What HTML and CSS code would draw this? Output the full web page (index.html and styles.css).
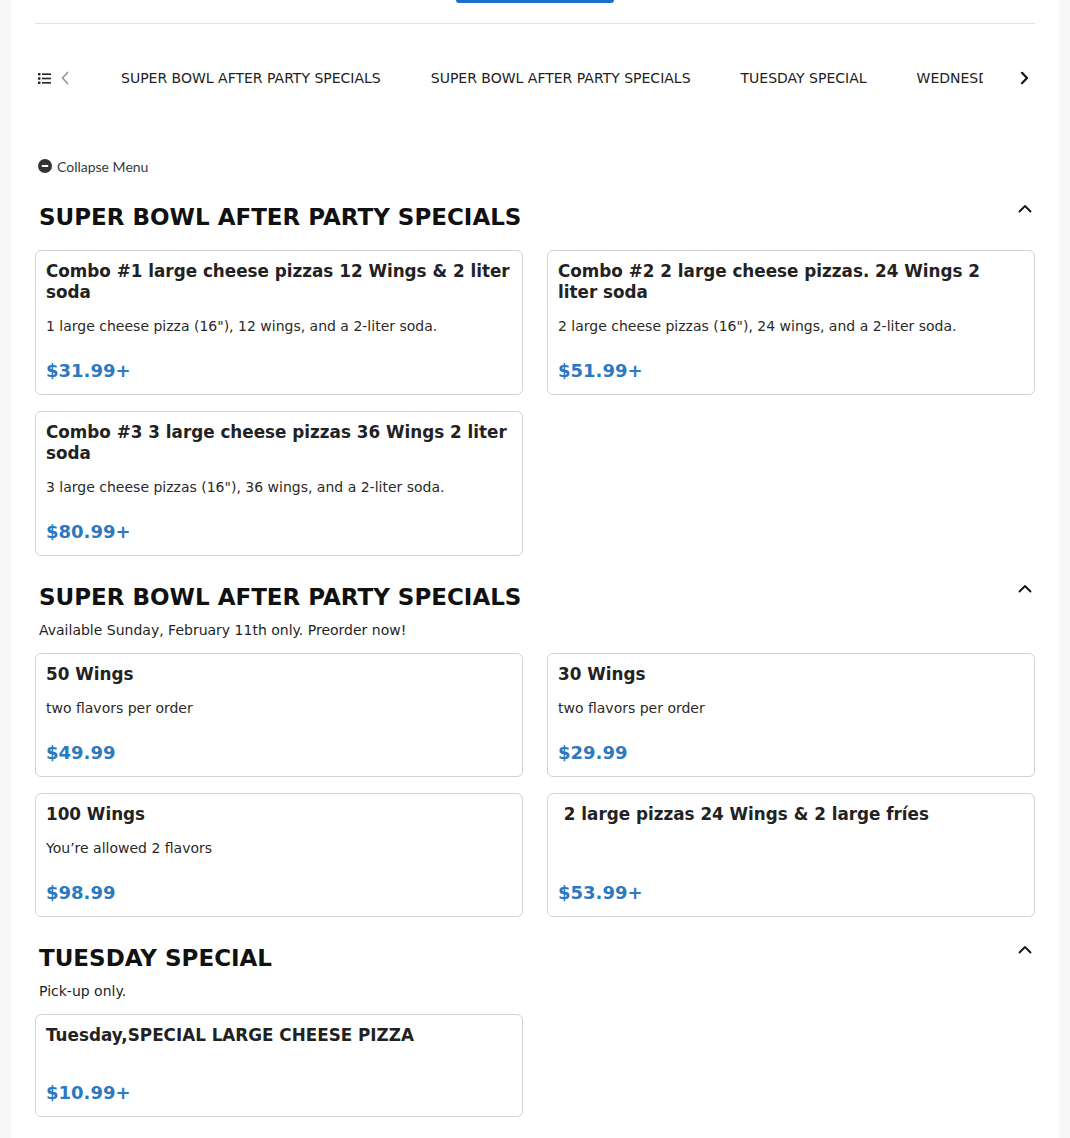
FILE: index.html
```html
<!DOCTYPE html>
<html lang="en">
<head>
<meta charset="utf-8">
<title>Menu</title>
<link rel="stylesheet" href="styles.css">
</head>
<body>
<div class="page">
  <div class="topbar"><div class="top-btn"></div></div>

  <nav class="tabs">
    <div class="tab-controls">
      <svg class="list-icon" width="13" height="11" viewBox="0 0 13 11" aria-hidden="true">
        <rect x="0" y="0" width="2.4" height="2.4" fill="#222"/>
        <rect x="0" y="4.3" width="2.4" height="2.4" fill="#222"/>
        <rect x="0" y="8.6" width="2.4" height="2.4" fill="#222"/>
        <rect x="4" y="0.4" width="9" height="1.6" fill="#222"/>
        <rect x="4" y="4.7" width="9" height="1.6" fill="#222"/>
        <rect x="4" y="9" width="9" height="1.6" fill="#222"/>
      </svg>
      <svg class="prev-icon" width="8" height="14" viewBox="0 0 8 14" aria-hidden="true">
        <path d="M6.5 1.5 L1.5 7 L6.5 12.5" fill="none" stroke="#9a9a9a" stroke-width="1.8" stroke-linecap="round" stroke-linejoin="round"/>
      </svg>
    </div>
    <div class="tab-scroll">
      <a class="tab">SUPER BOWL AFTER PARTY SPECIALS</a>
      <a class="tab">SUPER BOWL AFTER PARTY SPECIALS</a>
      <a class="tab">TUESDAY SPECIAL</a>
      <a class="tab">WEDNESDAY SPECIAL</a>
      <a class="tab">THURSDAY SPECIAL</a>
    </div>
    <div class="tab-next">
      <svg width="9" height="14" viewBox="0 0 9 14" aria-hidden="true">
        <path d="M2 1.8 L7 7 L2 12.2" fill="none" stroke="#111" stroke-width="2.2" stroke-linecap="round" stroke-linejoin="round"/>
      </svg>
    </div>
  </nav>

  <div class="collapse">
    <svg width="14" height="14" viewBox="0 0 14 14" aria-hidden="true">
      <circle cx="7" cy="7" r="7" fill="#343434"/>
      <rect x="3.8" y="6" width="6.4" height="2" fill="#fff"/>
    </svg>
    <span>Collapse Menu</span>
  </div>

  <section class="section">
    <div class="section-head">
      <h2>SUPER BOWL AFTER PARTY SPECIALS</h2>
      <svg class="chev" width="14" height="9" viewBox="0 0 14 9" aria-hidden="true">
        <path d="M1.5 7.5 L7 2 L12.5 7.5" fill="none" stroke="#111" stroke-width="1.8" stroke-linecap="round" stroke-linejoin="round"/>
      </svg>
    </div>
    <div class="grid">
      <div class="card">
        <h3>Combo #1 large cheese pizzas 12 Wings &amp; 2 liter soda</h3>
        <p class="desc">1 large cheese pizza (16"), 12 wings, and a 2-liter soda.</p>
        <div class="price">$31.99+</div>
      </div>
      <div class="card">
        <h3>Combo #2 2 large cheese pizzas. 24 Wings 2 liter soda</h3>
        <p class="desc">2 large cheese pizzas (16"), 24 wings, and a 2-liter soda.</p>
        <div class="price">$51.99+</div>
      </div>
      <div class="card">
        <h3>Combo #3 3 large cheese pizzas 36 Wings 2 liter soda</h3>
        <p class="desc">3 large cheese pizzas (16"), 36 wings, and a 2-liter soda.</p>
        <div class="price">$80.99+</div>
      </div>
    </div>
  </section>

  <section class="section">
    <div class="section-head has-sub">
      <h2>SUPER BOWL AFTER PARTY SPECIALS</h2>
      <svg class="chev" width="14" height="9" viewBox="0 0 14 9" aria-hidden="true">
        <path d="M1.5 7.5 L7 2 L12.5 7.5" fill="none" stroke="#111" stroke-width="1.8" stroke-linecap="round" stroke-linejoin="round"/>
      </svg>
    </div>
    <p class="sub">Available Sunday, February 11th only. Preorder now!</p>
    <div class="grid">
      <div class="card">
        <h3>50 Wings</h3>
        <p class="desc">two flavors per order</p>
        <div class="price">$49.99</div>
      </div>
      <div class="card">
        <h3>30 Wings</h3>
        <p class="desc">two flavors per order</p>
        <div class="price">$29.99</div>
      </div>
      <div class="card">
        <h3>100 Wings</h3>
        <p class="desc">You’re allowed 2 flavors</p>
        <div class="price">$98.99</div>
      </div>
      <div class="card">
        <h3>&nbsp;2 large pizzas 24 Wings &amp; 2 large fríes</h3>
        <p class="desc"></p>
        <div class="price">$53.99+</div>
      </div>
    </div>
  </section>

  <section class="section">
    <div class="section-head has-sub">
      <h2>TUESDAY SPECIAL</h2>
      <svg class="chev" width="14" height="9" viewBox="0 0 14 9" aria-hidden="true">
        <path d="M1.5 7.5 L7 2 L12.5 7.5" fill="none" stroke="#111" stroke-width="1.8" stroke-linecap="round" stroke-linejoin="round"/>
      </svg>
    </div>
    <p class="sub">Pick-up only.</p>
    <div class="grid">
      <div class="card">
        <h3>Tuesday,SPECIAL LARGE CHEESE PIZZA</h3>
        <p class="desc"></p>
        <div class="price">$10.99+</div>
      </div>
    </div>
  </section>
</div>
</body>
</html>
```

FILE: styles.css
```css
html, body {
  margin: 0;
  padding: 0;
}

body {
  background: #f7f7f7;
  font-family: "DejaVu Sans", sans-serif;
  color: #1f1f1f;
}

.page {
  background: #ffffff;
  margin: 0 11px;
  padding: 0 24px 40px;
  min-height: 1200px;
}

.topbar {
  height: 23px;
  border-bottom: 1px solid #e2e2e2;
  display: flex;
  justify-content: center;
}

.top-btn {
  width: 158px;
  height: 3px;
  background: #1b6fcf;
  border-radius: 0 0 4px 4px;
}

/* tabs */
.tabs {
  margin-top: 44px;
  height: 20px;
  display: flex;
  align-items: center;
}

.tab-controls {
  width: 61px;
  flex: none;
  display: flex;
  align-items: center;
  gap: 10px;
  padding-left: 3px;
  box-sizing: border-box;
}

.tab-scroll {
  flex: 1;
  display: flex;
  overflow: hidden;
  white-space: nowrap;
}

.tab {
  flex: none;
  padding: 0 25px;
  font-size: 14px;
  line-height: 20px;
  color: #222;
}

.tab-next {
  width: 52px;
  flex: none;
  display: flex;
  justify-content: flex-end;
  padding-right: 6px;
  box-sizing: border-box;
}

/* collapse */
.collapse {
  margin-top: 68px;
  height: 20px;
  display: flex;
  align-items: center;
  gap: 5px;
  padding-left: 3px;
  font-family: Lato, "Open Sans", sans-serif;
  font-size: 14px;
  color: #3a3a3a;
}

/* sections */
.section {
  margin-top: 27px;
}

.section-head {
  display: flex;
  justify-content: space-between;
  align-items: flex-start;
  padding: 0 3px 0 4px;
  margin-bottom: 19px;
}

.section-head.has-sub {
  margin-bottom: 0;
}

.section-head h2 {
  margin: 0;
  font-size: 23px;
  line-height: 28px;
  font-weight: bold;
  color: #111;
}

.chev {
  margin-top: 1px;
}

.sub {
  margin: 9px 0 13px;
  padding-left: 4px;
  font-size: 14px;
  line-height: 20px;
  color: #1f1f1f;
}

.grid {
  display: grid;
  grid-template-columns: 1fr 1fr;
  column-gap: 24px;
  row-gap: 16px;
}

.card {
  border: 1px solid #d2d2d2;
  border-radius: 6px;
  padding: 10px 10px 11px;
  display: flex;
  flex-direction: column;
}

.card h3 {
  margin: 0;
  font-size: 16.8px;
  line-height: 21px;
  font-weight: bold;
  color: #222;
}

.desc {
  margin: 13px 0 23px;
  font-size: 14px;
  line-height: 20px;
  color: #2a2a2a;
}

.desc:empty {
  height: 0;
  margin-top: 12px;
}

.price {
  margin-top: auto;
  font-size: 18px;
  line-height: 24px;
  font-weight: bold;
  color: #2b79bf;
}
```
